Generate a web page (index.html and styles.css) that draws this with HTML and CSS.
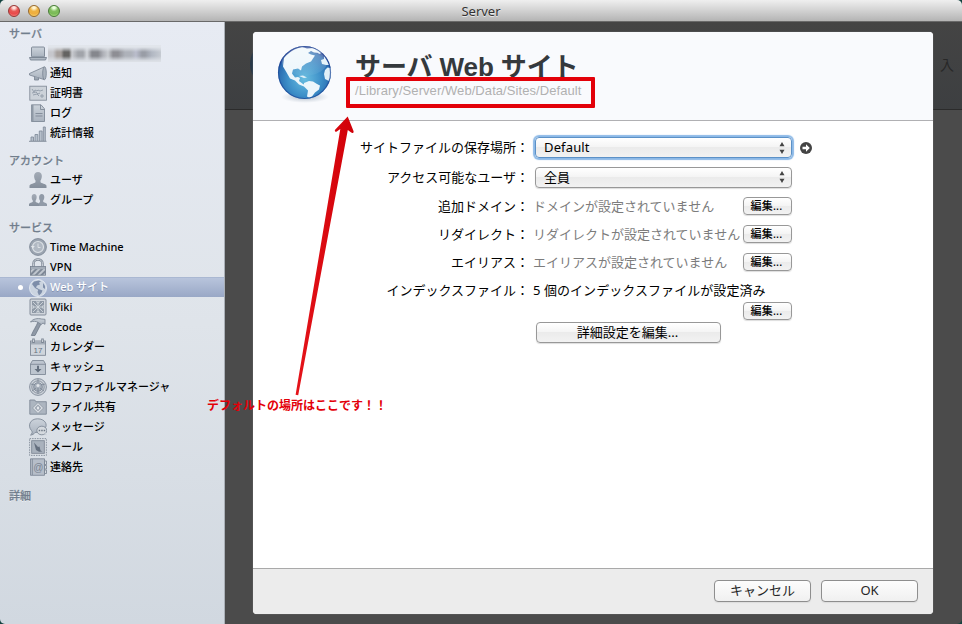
FILE: index.html
```html
<!DOCTYPE html>
<html lang="ja">
<head>
<meta charset="utf-8">
<title>Server</title>
<link rel="stylesheet" href="styles.css">
</head>
<body>
<svg class="defs" width="0" height="0">
  <defs>
    <linearGradient id="g" x1="0" y1="0" x2="0" y2="1"><stop offset="0" stop-color="#a3abb6"/><stop offset="1" stop-color="#848e9b"/></linearGradient>
    <linearGradient id="l" x1="0" y1="0" x2="0" y2="1"><stop offset="0" stop-color="#ccd3db"/><stop offset="1" stop-color="#a9b2be"/></linearGradient>
    <pattern id="stripe" width="4" height="4" patternUnits="userSpaceOnUse" patternTransform="rotate(45)"><rect width="4" height="4" fill="#c0c6ce"/><rect width="2" height="4" fill="#7e8896"/></pattern>
    <radialGradient id="sea" cx=".5" cy=".62" r=".58"><stop offset="0" stop-color="#68bde0"/><stop offset=".55" stop-color="#3d8fc8"/><stop offset=".88" stop-color="#2869af"/><stop offset="1" stop-color="#12308a"/></radialGradient>
    <radialGradient id="shade"><stop offset="0" stop-color="#75879b" stop-opacity=".6"/><stop offset="1" stop-color="#9aa9b9" stop-opacity="0"/></radialGradient>
    <linearGradient id="gloss" x1="0" y1="0" x2="0" y2="1"><stop offset="0" stop-color="#fff" stop-opacity=".4"/><stop offset="1" stop-color="#fff" stop-opacity=".03"/></linearGradient>
    <linearGradient id="red" x1="0" y1="0" x2="1" y2="0"><stop offset="0" stop-color="#e5141a"/><stop offset="1" stop-color="#d00008"/></linearGradient>
  </defs>
</svg>
<div class="window">
  <header class="titlebar">
    <div class="lights"><i class="light close"></i><i class="light minimize"></i><i class="light zoom"></i></div>
    <h1>Server</h1>
  </header>
  <div class="body">
    <nav class="sidebar">
      <section>
        <h2>サーバ</h2>
        <ul>
          <li><svg viewBox="0 0 18 18"><rect x="2.500" y="3" width="13" height="10" rx="1" fill="url(#l)" stroke="#737d8b"/><path d="M.5 13.500h17l-1 2.500h-15z" fill="#aeb7c2" stroke="#737d8b"/></svg><span class="mosaic"></span></li>
          <li><svg viewBox="0 0 18 18"><path d="M.5 9.500 15 3v12.500L.5 11z" fill="url(#l)" stroke="#7b8593"/><ellipse cx="15.500" cy="9.200" rx="1.800" ry="6.500" fill="#aab3be" stroke="#7b8593"/><path d="M5.500 12.500v3.500h4v-2.300" fill="#9ba5b1" stroke="#7b8593"/></svg>通知</li>
          <li><svg viewBox="0 0 18 18"><rect x=".8" y="2.200" width="16.700" height="14" fill="#ccd2d9" stroke="#808a97"/><path d="M3 5l2 3 1-2 2 1 1-1 2 1 3-1M3 9l4-1 2 2 2-1M4 11l4-1 2 2M11 12h4M13 10v4" fill="none" stroke="#8e98a5"/></svg>証明書</li>
          <li><svg viewBox="0 0 18 18"><path d="M2.500.8h9.500l3.500 4v12.700h-13z" fill="url(#l)" stroke="#7b8593"/><path d="M2.500 1h2v16h-2z" fill="#8f99a6"/><path d="M11.500 1v4.500h4M6.500 9.500h7M6.500 12h7" fill="none" stroke="#7b8593"/></svg>ログ</li>
          <li><svg viewBox="0 0 18 18"><path d="M2 17v-4h2.500v4M6 17v-6.500h2.800V17M10.300 17V7h2.800v10M14.300 17V3h2v14" fill="#b7c0cb" stroke="#808a98"/><path d="M0 17.300h17.500" stroke="#737d8b"/></svg>統計情報</li>
        </ul>
      </section>
      <section>
        <h2>アカウント</h2>
        <ul>
          <li><svg viewBox="0 0 18 18"><path d="M.5 17v-2.200c.3-1.800 5.500-2.500 6-3.500V9.500C4.500 7 4.200 1 9 1s4.500 6 2.500 8.500v1.800c.5 1 5.700 1.700 6 3.500V17z" fill="url(#g)"/></svg>ユーザ</li>
          <li><svg viewBox="0 0 18 18"><path d="M8 15h10v-2c0-1-3.600-1.500-3.800-2.300V9.500c1.800-2 1.600-6.500-1.400-6.500s-3.300 4.500-1.800 6.500v1.200z" fill="#919ba8"/><path d="M0 15v-2c0-1 3.600-1.500 3.800-2.300V9.500C2.200 7.500 2.200 3 5.200 3s3 4.500 1.400 6.500v1.200c.2.800 3.700 1.300 3.700 2.300v2z" fill="url(#g)"/></svg>グループ</li>
        </ul>
      </section>
      <section class="services">
        <h2>サービス</h2>
        <ul>
          <li><svg viewBox="0 0 18 18"><circle cx="9" cy="9" r="8.400" fill="#9ca5b1" stroke="#7b8593"/><circle cx="9" cy="9" r="5.500" fill="#b1b9c3" stroke="#dce1e6" stroke-width="1.200"/><path d="M9 5.500v4h2.500" fill="none" stroke="#e3e7eb"/><path d="M1.800 8h4L3.800 10.500z" fill="#e3e7eb"/></svg>Time Machine</li>
          <li><svg viewBox="0 0 18 18"><path d="M4.500 9V5.500C4.500 0 13.500 0 13.500 5.500V9" fill="none" stroke="#818b98" stroke-width="2.500"/><path d="M4.500 9V5.500C4.500 0 13.500 0 13.500 5.500V9" fill="none" stroke="#c5cbd3" stroke-width="1"/><rect x="1.500" y="8.500" width="15" height="8.700" fill="url(#stripe)" stroke="#77818f"/><path d="M2 10h14" stroke="#a4adb8" stroke-width="2.300"/></svg>VPN</li>
          <li class="selected"><svg viewBox="0 0 18 18"><circle cx="9" cy="9" r="8.500" fill="#cbd4e0" stroke="#e6ecf4"/><path d="M5 2.500 10 1.500l2 1-2 1 1 2-3 1-1 2 2 1 1.500 1.500-2-.5-2.500-1.500L3 5zM9.500 10l4 1.500-1 2.500-2.500 2.500-1.500-3.500zM14 4l2 3v3l-2-1.500z" fill="#7d8da9"/></svg><span>Web サイト</span></li>
          <li><svg viewBox="0 0 18 18"><rect x="1" y="1" width="16" height="16" rx="1" fill="#d0d5dc" stroke="#77818f"/><rect x="3" y="3" width="12" height="12" fill="#8f99a6"/><path d="M9 3v12M3 9h12M4 4l10 10M14 4 4 14M7 3.500 9 5l2-1.500M7 14.500 9 13l2 1.500M3.500 7 5 9l-1.500 2M14.500 7 13 9l1.500 2" stroke="#d5dae0" fill="none"/></svg>Wiki</li>
          <li><svg viewBox="0 0 18 18"><path d="M9 4 12.200 5.500 6 17.500H2.300C4 13 7.500 8 9 4z" fill="#8f99a6" stroke="#737d8b"/><path d="M1.500 4C4 .8 8.500 0 12.500 1l3.500.3v5l-2-1.300L12.200 6.500 9.200 4.500C7 3 4.500 3 1.500 4z" fill="url(#l)" stroke="#7b8593"/></svg>Xcode</li>
          <li><svg viewBox="0 0 18 18"><rect x="1.500" y="3" width="15" height="14.300" fill="#cfd5dc" stroke="#7b8593"/><path d="M2 3.500h14v3H2z" fill="#a4adb8"/><path d="M4.500.5V5M13.500.5V5" stroke="#7b8593" stroke-width="2.500"/><path d="M4.500 1.500v2.500M13.500 1.500v2.500" stroke="#d9dee4"/><text x="9" y="15.200" text-anchor="middle" font-size="8" font-family="Liberation Sans,sans-serif" fill="#65707f">17</text></svg>カレンダー</li>
          <li><svg viewBox="0 0 18 18"><path d="M3.500 2.500h11l2 3.500v10.500h-15V6z" fill="#bdc5cf" stroke="#7b8593"/><path d="M1.500 6.300h15" stroke="#7b8593"/><path d="M8 7.800h2V11h2.500L9 14.500 5.500 11H8z" fill="#65707f"/></svg>キャッシュ</li>
          <li><svg viewBox="0 0 18 18"><circle cx="9" cy="9" r="8.400" fill="#ccd2d9" stroke="#7b8593"/><circle cx="9" cy="9" r="6.200" fill="none" stroke="#7b8593"/><circle cx="9" cy="9" r="4.300" fill="#a6afba" stroke="#7b8593"/><circle cx="9" cy="7.500" r="1.500" fill="#e1e5e9"/><path d="M3 13 7 10M15 13l-4-3M9 10v6M9 1v3M2 6l4 1M16 6l-4 1" stroke="#7b8593"/></svg>プロファイルマネージャ</li>
          <li><svg viewBox="0 0 18 18"><path d="M.8 4V2h5l1 1.700h10.500V16.200H.8z" fill="#acb5c0" stroke="#7b8593"/><path d="M9 4.500 14.500 10 9 15.500 3.500 10z" fill="#dce0e5" stroke="#8d97a4"/><path d="m9 6.500 3.300 3.500L9 13.300 5.700 10z" fill="#97a0ad"/><path d="m9 8 1.500 2L9 12l-1.500-2z" fill="#e7eaee"/></svg>ファイル共有</li>
          <li><svg viewBox="0 0 18 18"><path d="M1.500 17c2-1.500 2-3 1-4.500C-1.700 8 1 .8 8.500.8S19 6.500 16 10.500C13 15 8 14 6 14.500 5 16 3.500 17 1.500 17z" fill="url(#l)" stroke="#7b8593"/><ellipse cx="12.800" cy="12.500" rx="5" ry="4.300" fill="#d5dadf" stroke="#7b8593"/><path d="m15 16 2.500 1.500-.5-3" fill="#c5ccd4"/><path d="M9.700 12.600h6.500" stroke="#6e7886" stroke-width="1.500" stroke-dasharray="1.500 1"/></svg>メッセージ</li>
          <li><svg viewBox="0 0 18 18"><rect x=".6" y=".6" width="16.800" height="16.800" fill="#d9dee4" stroke="#7b8593" stroke-dasharray="1.500 1"/><rect x="2.700" y="2.700" width="12.600" height="12.600" fill="#a9b2bd" stroke="#7b8593"/><path d="m5 4.500 4 4.500 1.500-.5 1 4 2 1-3.500.2-3-1.700z" fill="#65707f"/></svg>メール</li>
          <li><svg viewBox="0 0 18 18"><path d="M15.500 3h2v3.500h-2zM15.500 7.500h2V11h-2zM15.500 12h2v3.500h-2z" fill="#d5dadf" stroke="#7b8593"/><path d="M1.500.8h14v16.500h-14z" fill="#b6bec9" stroke="#7b8593"/><path d="M3.300 1v16" stroke="#7b8593"/><text x="9.300" y="12.500" text-anchor="middle" font-size="10" font-family="Liberation Sans,sans-serif" fill="#7b8593">@</text></svg>連絡先</li>
        </ul>
      </section>
      <section><h2>詳細</h2></section>
    </nav>
    <main class="stage">
      <div class="backdrop"><i class="backglobe"></i><span>入</span></div>
      <div class="sheet">
        <div class="sheet-head">
          <svg class="globe" viewBox="0 0 60 62">
            <ellipse cx="30" cy="54" rx="24" ry="6" fill="url(#shade)"/>
            <circle cx="29.500" cy="29.500" r="26.500" fill="url(#sea)"/>
            <path d="M9 15C14 9 20 5.500 27 4l5 1.500 6-.5 4 2 3 3-6-.5-3-1.500-3 2 3 1.500 4 1-2 3-2 3-5 2-4 3-1 4-3-2-5 1-1 4 3 4 3-.5 2 1-1 3 4 3 2 1-1 1.500-5-2-4-4-5-2-4-7-3-5z" fill="#edf6fb"/>
            <path d="m29 40 5-2 4 .5 4 2.500 3 1.500-1 4-4 3-3 4-3 1-2-1 1-6-4-4z" fill="#edf6fb"/>
            <path d="m49 16-3 1 1 4 4 1 3 0c-1-3-3-6-5-9zM50 27l-1 4 1 5 4 2c2-5 2-8 1.500-13l-3-.5zM40 6l3 1 4 3-3 1z" fill="#e1f0f8"/>
            <path d="m24 33 4-.5 4 2-3 .5z" fill="#e1f0f8"/>
            <ellipse cx="29.500" cy="18" rx="23" ry="15" fill="url(#gloss)"/>
            <circle cx="29.500" cy="29.500" r="26" fill="none" stroke="#173d91" stroke-width="1.200" opacity=".6"/>
          </svg>
          <div class="heading"><h3>サーバ Web サイト</h3><p>/Library/Server/Web/Data/Sites/Default</p></div>
        </div>
        <div class="form">
          <div class="row first"><label>サイトファイルの保存場所：</label><div class="select focus">Default<svg viewBox="0 0 6 12"><path d="M3 0 5.500 4.300H.5zM3 12 .5 7.700h5z"/></svg></div><svg class="go" viewBox="0 0 12 12"><circle cx="6" cy="6" r="6" fill="#444"/><path d="M2.500 4.800H6V2.300L9.800 6 6 9.700V7.200H2.500z" fill="#fff"/></svg></div>
          <div class="row second"><label>アクセス可能なユーザ：</label><div class="select">全員<svg viewBox="0 0 6 12"><path d="M3 0 5.500 4.300H.5zM3 12 .5 7.700h5z"/></svg></div></div>
          <div class="row"><label>追加ドメイン：</label><span class="value muted">ドメインが設定されていません</span><button class="small">編集...</button></div>
          <div class="row"><label>リダイレクト：</label><span class="value muted">リダイレクトが設定されていません</span><button class="small">編集...</button></div>
          <div class="row"><label>エイリアス：</label><span class="value muted">エイリアスが設定されていません</span><button class="small">編集...</button></div>
          <div class="row index"><label>インデックスファイル：</label><span class="value">5 個のインデックスファイルが設定済み</span></div>
          <div class="tail"><button class="small">編集...</button></div>
          <button class="advanced">詳細設定を編集...</button>
        </div>
        <footer class="sheet-foot"><button>キャンセル</button><button>OK</button></footer>
      </div>
    </main>
  </div>
  <div class="callout-box"></div>
  <svg class="callout-line" viewBox="0 0 70 290"><path d="M57.700 6.500 63.500 21c.5 2-1 2.500-2.300 1.500L57.800 20 8.200 285.200 5.600 284.800 50.300 19l-3.500 2.500c-1.500.8-2.500-.2-1.700-1.700z" fill="url(#red)"/></svg>
  <p class="callout-text">デフォルトの場所はここです！！</p>
</div>
</body>
</html>
```
FILE: styles.css
```css
* { box-sizing: border-box; }
body, h1, h2, h3, p, ul { margin: 0; padding: 0; font-weight: normal; }
body { width: 962px; height: 624px; overflow: hidden; background: #12423f; font: 13px "Noto Sans", "Noto Sans CJK JP", sans-serif; color: #000; }
.defs { position: absolute; }
.window { position: relative; width: 962px; height: 624px; border-radius: 5px; overflow: hidden; display: flex; flex-direction: column; }
.titlebar { height: 22px; flex: none; display: grid; grid-template-columns: 1fr auto 1fr; align-items: center; background: linear-gradient(#efefef, #d2d2d2 50%, #b4b4b4); border-bottom: 1px solid #696969; }
.titlebar h1 { grid-column: 2; font-size: 13px; line-height: 20px; padding-top: 1px; color: #333; text-shadow: 0 1px #e8e8e8; }
.lights { display: flex; gap: 8px; padding-left: 8px; }
.light { width: 12px; height: 12px; border-radius: 50%; border: 1px solid; }
.close { background: radial-gradient(circle at 50% 15%, #ffe0dc 0 12%, #e75a56 40%, #e9494a 65%, #ff9f95); border-color: #963735; }
.minimize { background: radial-gradient(circle at 50% 15%, #fff4d0 0 12%, #eeb243 40%, #efae3e 65%, #ffe98a); border-color: #96682c; }
.zoom { background: radial-gradient(circle at 50% 15%, #eaffdc 0 12%, #83bf61 40%, #79b956 65%, #c5f39b); border-color: #467a35; }
.body { flex: 1; display: flex; min-height: 0; }
.sidebar { width: 225px; flex: none; padding-top: 1px; background: linear-gradient(#e7ebf3, #dfe4ea 50%, #d1d8e0); border-right: 1px solid #aab0b7; font-size: 11px; }
.sidebar section { margin-bottom: 7px; }
.sidebar section.services { margin-bottom: 8px; }
.sidebar h2 { height: 20px; line-height: 20px; padding: 1px 0 0 9px; font-size: 11px; font-weight: 500; color: #717e8d; text-shadow: 0 1px #f3f5f8; -webkit-text-stroke: .25px #717e8d; }
.sidebar ul { list-style: none; }
.sidebar li { height: 20px; line-height: 20px; display: flex; align-items: center; padding-left: 29px; gap: 3px; font-weight: 500; white-space: nowrap; }
.sidebar li svg { width: 18px; height: 18px; flex: none; stroke-width: .85; margin-left: -.5px; margin-right: .5px; }
.sidebar li.selected { position: relative; color: #fff; background: linear-gradient(#b8c4dc, #99a8c6); border-top: 1px solid #aab8d2; text-shadow: 0 1px #8291b0; }
.selected span { margin-top: -1px; }
.selected::before { content: ""; position: absolute; left: 18px; top: 7px; width: 5px; height: 5px; border-radius: 50%; background: #fff; }
.mosaic { width: 113px; height: 17px; margin-left: -2px; background: linear-gradient(#e1e5eb 0 2px, transparent 7px 11px, #dce0e6 16px), linear-gradient(90deg, #c6c7cc 0 5px, #a59f9c 9px 13px, #646361 16px 21px, #c9cbd0 24px, #a1a4aa 30px 35px, #d2d5da 39px, #85878d 44px 50px, #aeb0b7 55px, #c8cbd0 60px, #8e8e94 65px 70px, #aeb2ba 77px 83px, #babdcc 88px, #999da6 94px 97px, #b2b8c3 104px, #c6cbd2); }
.stage { flex: 1; display: grid; background: #4b4b4b; }
.backdrop { grid-area: 1/1; height: 88px; background: linear-gradient(#444, #3d3f41); border-bottom: 1px solid #2b2b2b; display: flex; align-items: center; justify-content: space-between; font-size: 14px; color: #282828; padding: 0 8px 3px 25px; overflow: hidden; }
.backglobe { width: 50px; height: 50px; border-radius: 50%; background: #293848; }
.sheet { grid-area: 1/1; position: relative; margin: 10px 29px 10px 28px; height: 582px; width: 680px; background: #fff; border-radius: 4px; overflow: hidden; display: flex; flex-direction: column; box-shadow: 0 0 1px #aaa; }
.sheet-head { height: 89px; flex: none; display: flex; background: #f9fafd; border-bottom: 1px solid #b0b0b3; padding-left: 22px; }
.globe { width: 60px; height: 62px; margin-top: 11px; }
.heading { padding: 18px 0 0 20px; }
h3 { font: bold 26px/34px "Liberation Sans", "Noto Sans CJK JP", sans-serif; color: #35393d; white-space: nowrap; letter-spacing: -.1px; }
.heading p { font: 13px/14px "Liberation Sans", sans-serif; color: #b1b1b1; letter-spacing: .07px; }
.form { flex: 1; padding-top: 12px; display: flex; flex-direction: column; align-items: flex-start; }
.row { height: 28px; width: 560px; display: flex; align-items: center; }
.row.first { height: 29px; }
.row.second { height: 30px; }
.row.index { height: 26px; padding-top: 2px; }
.row label { width: 276px; flex: none; margin-right: 2px; padding-bottom: 2px; text-align: right; white-space: nowrap; }
.value { width: 209px; margin-left: 2px; padding-bottom: 2px; white-space: nowrap; }
.index .value { letter-spacing: .06px; }
.muted { color: #7c7c7c; }
.select, button { border: 1px solid #989898; border-radius: 4px; background: linear-gradient(#fff, #f4f4f4 49%, #ebebeb 50%, #f2f2f2); box-shadow: 0 1px 1px #ddd; font-family: inherit; color: #000; font-size: 13px; }
.select { width: 257px; height: 21px; margin-left: 4px; padding: 0 6px 0 8px; display: flex; align-items: center; justify-content: space-between; line-height: 19px; }
.select svg { width: 6px; height: 12px; fill: #444; }
.focus { border-color: #5c91c7; box-shadow: 0 0 1px 2px #8cb9e7; letter-spacing: .15px; }
.go { width: 12px; height: 12px; margin-left: 8px; }
button { padding: 0; display: flex; align-items: center; justify-content: center; white-space: nowrap; line-height: 1; }
.small { width: 49px; height: 18px; margin-left: 1px; padding: 0 2px 1px 0; font-size: 11px; font-weight: 500; letter-spacing: .2px; }
.tail { height: 18px; padding-left: 489px; }
.advanced { width: 185px; height: 21px; margin: 2px 0 0 283px; padding: 0 2px 1px 0; }
.sheet-foot { height: 46px; flex: none; display: flex; justify-content: flex-end; gap: 10px; padding: 11px 15px 0; background: #ececec; border-top: 1px solid #a9a9a9; }
.sheet-foot button { width: 97px; height: 22px; padding-bottom: 1px; background: linear-gradient(#fdfdfd, #f0f0f0); border-color: #8e8e8e; color: #262626; }
.callout-box { position: absolute; left: 346px; top: 77px; width: 249px; height: 31px; border: 4px solid #e30009; border-radius: 1px; }
.callout-line { position: absolute; left: 290px; top: 110px; width: 70px; height: 290px; }
.callout-text { position: absolute; left: 207px; top: 396px; font-size: 12px; line-height: 20px; font-weight: bold; color: #e30009; white-space: nowrap; }
```
